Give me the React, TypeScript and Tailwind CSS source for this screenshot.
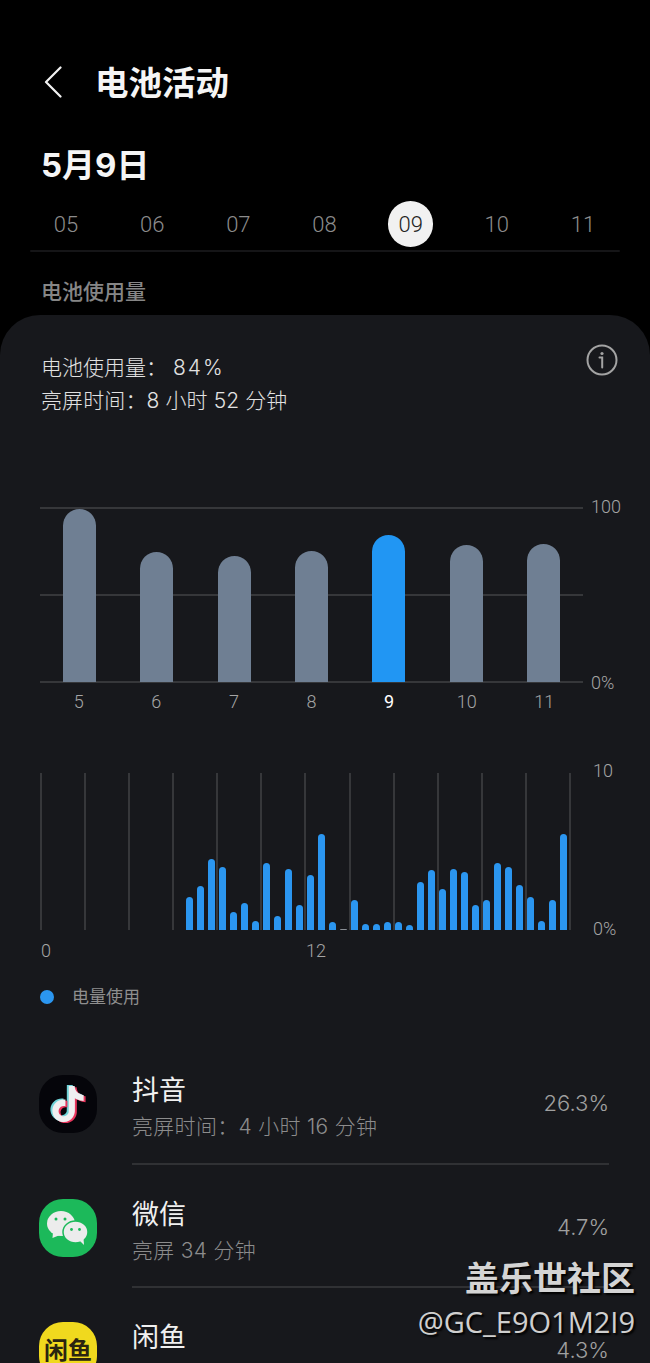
const days = ["05", "06", "07", "08", "09", "10", "11"];
const weekBars = [
  { label: "5", top: 2 },
  { label: "6", top: 45 },
  { label: "7", top: 49 },
  { label: "8", top: 44 },
  { label: "9", top: 28, active: true },
  { label: "10", top: 38 },
  { label: "11", top: 37 },
];
const hourBars = [33, 44, 71, 63, 18, 27, 9, 67, 14, 61, 25, 55, 96, 8, 1, 30, 6, 6, 8, 8, 5, 48, 60, 41, 61, 58, 25, 30, 67, 63, 45, 33, 9, 30, 96];
const NOTE =
  "M12.525.02c1.31-.02 2.61-.01 3.91-.02.08 1.53.63 3.09 1.75 4.17 1.12 1.11 2.7 1.62 4.24 1.79v4.03c-1.44-.05-2.89-.35-4.2-.97-.57-.26-1.1-.59-1.62-.93-.01 2.92.01 5.84-.02 8.75-.08 1.4-.54 2.79-1.35 3.94-1.31 1.92-3.58 3.17-5.91 3.21-1.43.08-2.86-.31-4.08-1.03-2.02-1.19-3.44-3.37-3.65-5.71-.02-.5-.03-1-.01-1.49.18-1.9 1.12-3.72 2.58-4.96 1.66-1.44 3.98-2.13 6.15-1.72.02 1.48-.04 2.96-.04 4.44-.99-.32-2.15-.23-3.02.37-.63.41-1.11 1.04-1.36 1.75-.21.51-.15 1.07-.14 1.61.24 1.64 1.82 3.02 3.5 2.87 1.12-.01 2.19-.66 2.77-1.61.19-.33.4-.67.41-1.06.1-1.79.06-3.57.07-5.36.01-4.03-.01-8.05.02-12.07z";

function TikTokIcon() {
  return (
    <div className="w-[58px] h-[58px] rounded-[24px] bg-[#05050a] flex items-center justify-center">
      <svg width="36" height="38" viewBox="0 0 24 24">
        <path d={NOTE} fill="#6fd3d8" transform="translate(-1.3 -0.7)" />
        <path d={NOTE} fill="#e8365d" transform="translate(1.3 0.8)" />
        <path d={NOTE} fill="#efeff0" />
      </svg>
    </div>
  );
}

function WeChatIcon() {
  return (
    <div className="w-[58px] h-[58px] rounded-[24px] bg-[#1cb95a]">
      <svg width="58" height="58" viewBox="0 0 58 58">
        <ellipse cx="22" cy="24.5" rx="14" ry="12.5" fill="#ececec" />
        <path d="M14 33 L13.5 39 L21 36 Z" fill="#ececec" />
        <circle cx="17" cy="20" r="1.5" fill="#1cb95a" />
        <circle cx="26" cy="20" r="1.5" fill="#1cb95a" />
        <ellipse cx="36.5" cy="33" rx="12.5" ry="11" fill="#ececec" stroke="#1cb95a" strokeWidth="1.5" />
        <path d="M41 42 L45 46 L44.5 39 Z" fill="#ececec" />
        <circle cx="32.5" cy="30.5" r="1.4" fill="#1cb95a" />
        <circle cx="40.5" cy="30.5" r="1.4" fill="#1cb95a" />
      </svg>
    </div>
  );
}

function XianyuIcon() {
  return (
    <div className="w-[58px] h-[58px] rounded-[24px] bg-[#f0d91e] flex justify-center pt-[15px]">
      <span className="text-[24px] leading-[28px] font-bold text-[#2b2510]">闲鱼</span>
    </div>
  );
}

const apps = [
  { name: "抖音", sub: "亮屏时间：4 小时 16 分钟", pct: "26.3%", icon: <TikTokIcon /> },
  { name: "微信", sub: "亮屏 34 分钟", pct: "4.7%", icon: <WeChatIcon /> },
  { name: "闲鱼", sub: "", pct: "4.3%", icon: <XianyuIcon /> },
];

export default function App() {
  return (
    <div className="relative w-[650px] h-[1363px] overflow-hidden bg-black text-white [font-family:Roboto,'Noto_Sans_CJK_SC',sans-serif]">
      {/* Header */}
      <div className="flex items-center h-[56px] mt-[56px] pl-[44px]">
        <svg className="-mt-[5px]" width="18" height="32" viewBox="0 0 18 32" fill="none" stroke="#f2f2f2" strokeWidth="2.2" strokeLinecap="round" strokeLinejoin="round">
          <path d="M16.5 1.5 L2 16 L16.5 30.5" />
        </svg>
        <h1 className="ml-[33px] text-[33.5px] leading-[40px] font-bold text-[#f5f5f5]">电池活动</h1>
      </div>
      <div className="mt-[33px] pl-[41px] h-[40px] text-[33px] leading-[40px] font-bold text-[#f5f5f5] [font-family:Inter,'Noto_Sans_CJK_SC',sans-serif]">5月9日</div>

      {/* Day strip */}
      <div className="mt-[16px] ml-[23px] w-[603px] grid grid-cols-7 h-[46px]">
        {days.map((d) => (
          <div key={d} className="flex items-center justify-center">
            <span
              className={
                d === "09"
                  ? "w-[45px] h-[46px] rounded-full bg-[#f1f1f1] text-[#222] flex items-center justify-center text-[22px] font-light"
                  : "text-[22px] font-light text-[#8c8c8c]"
              }
            >
              {d}
            </span>
          </div>
        ))}
      </div>
      <div className="mt-[3px] mx-[30px] h-[2px] bg-[#151517] rounded-full" />
      <div className="mt-[25px] pl-[41px] h-[30px] text-[21px] leading-[30px] font-medium text-[#868686]">电池使用量</div>

      {/* Card */}
      <div className="mt-[8px] h-[1048px] rounded-t-[40px] bg-[#17181c] pt-[36px]">
        <div className="flex justify-between pl-[41px] pr-[32px]">
          <div className="text-[21px] leading-[33px] font-light text-[#e2e2e2] [font-family:Inter,'Noto_Sans_CJK_SC',sans-serif]">
            <div>
              电池使用量： <span className="tracking-[2px]">84%</span>
            </div>
            <div className="tracking-[0.1px]">亮屏时间：8 小时 52 分钟</div>
          </div>
          <svg className="-mt-[7px]" width="32" height="32" viewBox="0 0 32 32" fill="none" stroke="#a3a3a3" strokeWidth="2">
            <circle cx="16" cy="16" r="14.5" />
            <circle cx="16" cy="9.5" r="1.6" fill="#a3a3a3" stroke="none" />
            <path d="M13.5 13.5 H16.2 V23.5" strokeLinecap="round" />
          </svg>
        </div>

        {/* Weekly chart */}
        <div className="mt-[90px] ml-[40px] flex items-start">
          <div className="w-[543px]">
            <div className="grid h-[176px]">
              <div className="col-start-1 row-start-1 flex flex-col justify-between">
                <div className="h-[2px] bg-[#36373a]" />
                <div className="h-[2px] bg-[#36373a]" />
                <div className="h-[2px] bg-[#36373a]" />
              </div>
              <div className="col-start-1 row-start-1 ml-[1px] w-[541px] grid grid-cols-7">
                {weekBars.map((b) => (
                  <div key={b.label} className="flex justify-center">
                    <div
                      className={`w-[33px] rounded-t-full ${b.active ? "bg-[#2196f3]" : "bg-[#6f7f93]"}`}
                      style={{ marginTop: b.top, height: 175 - b.top }}
                    />
                  </div>
                ))}
              </div>
            </div>
            <div className="grid grid-cols-7 mt-[9px] h-[20px] text-[18px] leading-[20px] font-light">
              {weekBars.map((b) => (
                <div key={b.label} className={`text-center ${b.active ? "text-white font-normal" : "text-[#a5a5a5]"}`}>
                  {b.label}
                </div>
              ))}
            </div>
          </div>
          <div className="-mt-[10px] ml-[8px] h-[196px] flex flex-col justify-between text-[18px] leading-[20px] font-light text-[#a5a5a5]">
            <span>100</span>
            <span>0%</span>
          </div>
        </div>

        {/* Hourly chart */}
        <div className="mt-[61px] ml-[40px] flex items-start">
          <div className="w-[531px]">
            <div className="grid h-[157px]">
              <div className="col-start-1 row-start-1 flex justify-between">
                {Array.from({ length: 13 }).map((_, i) => (
                  <div key={i} className="w-[2px] bg-[#36373a]" />
                ))}
              </div>
              <div className="col-start-1 row-start-1 flex items-end gap-[4.02px] pl-[145.5px]">
                {hourBars.map((h, i) => (
                  <div
                    key={i}
                    className={`w-[7px] rounded-t-full ${h === 1 ? "bg-[#8a8f96]" : "bg-[#2b96f0]"}`}
                    style={{ height: h }}
                  />
                ))}
              </div>
            </div>
            <div className="flex mt-[11px] h-[20px] text-[18px] leading-[20px] font-light text-[#a5a5a5]">
              <span className="w-[266px] pl-[1px]">0</span>
              <span>12</span>
            </div>
          </div>
          <div className="-mt-[12px] ml-[22px] h-[178px] flex flex-col justify-between text-[18px] leading-[20px] font-light text-[#a5a5a5]">
            <span>10</span>
            <span>0%</span>
          </div>
        </div>

        {/* Legend */}
        <div className="mt-[26px] ml-[40px] h-[20px] flex items-center">
          <div className="w-[14px] h-[14px] rounded-full bg-[#2b96f0]" />
          <span className="ml-[18px] text-[17px] leading-[20px] text-[#8f8f8f]">电量使用</span>
        </div>

        {/* App list */}
        <div className="mt-[34px] pl-[39px] pr-[41px]">
          {apps.map((a) => (
            <div key={a.name} className="flex h-[123.5px]">
              <div className="w-[93px] pt-[34px]">{a.icon}</div>
              <div className="flex-1 flex justify-between items-center border-b-2 border-[#303134]">
                <div className="self-start pt-[32px]">
                  <div className="text-[27px] leading-[36px] text-[#f0f0f0]">{a.name}</div>
                  <div className="text-[21px] tracking-[0.3px] leading-[36px] font-light text-[#8c8c8c] [font-family:Inter,'Noto_Sans_CJK_SC',sans-serif]">{a.sub}</div>
                </div>
                <span className="pt-[4px] text-[22px] font-light text-[#a0a0a0] [font-family:Inter,sans-serif]">{a.pct}</span>
              </div>
            </div>
          ))}
        </div>
      </div>

      {/* Watermark */}
      <div className="absolute right-[15px] top-[1261px] text-right [text-shadow:2px_2px_2px_#000]">
        <div className="text-[34px] leading-[36px] font-bold text-[#d4d4d4]">盖乐世社区</div>
        <div className="mt-[7px] text-[29px] leading-[36px] text-[#cfcfcf] [font-family:'Open_Sans',sans-serif]">@GC_E9O1M2I9</div>
      </div>
    </div>
  );
}
